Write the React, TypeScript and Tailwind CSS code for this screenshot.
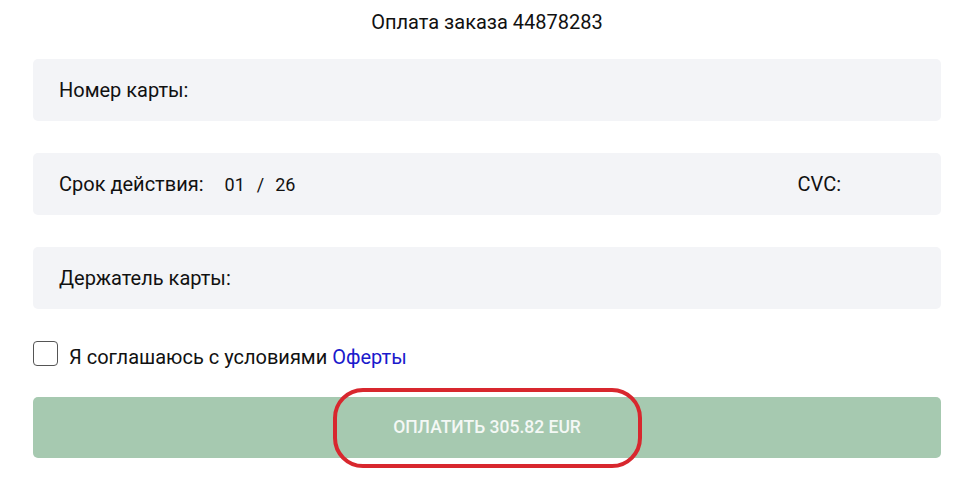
const font = { fontFamily: 'Roboto, "Liberation Sans", sans-serif' }

function Field({ children }: { children: React.ReactNode }) {
  return (
    <div className="flex h-[62px] items-center rounded-[5px] bg-[#f3f4f7] pl-[26px] pr-[26px] text-[20px] text-[#111]">
      {children}
    </div>
  )
}

export default function App() {
  return (
    <div className="min-h-[479px] bg-white pl-[33px] pr-[17px]" style={font}>
      <div className="flex h-[59px] items-start justify-center pt-[7px] text-[20px] text-[#111]">
        Оплата заказа 44878283
      </div>

      <div className="flex flex-col gap-[32px]">
        <Field>Номер карты:</Field>
        <Field>
          <span>Срок действия:</span>
          <span className="ml-[21px] text-[18px]">01</span>
          <span className="ml-[12px] text-[18px]">/</span>
          <span className="ml-[11px] text-[18px]">26</span>
          <span className="ml-auto mr-[74px]">CVC:</span>
        </Field>
        <Field>Держатель карты:</Field>
      </div>

      <label className="mt-[32px] flex h-[25px] items-center gap-[11px] text-[20px] leading-[25px] text-[#111]">
        <span className="h-[25px] w-[25px] shrink-0 rounded-[4px] border border-[#555] bg-white" />
        <span className="pt-[8px]">
          Я соглашаюсь с условиями <a className="text-[#1a1acc]">Оферты</a>
        </span>
      </label>

      <div className="relative mt-[31px]">
        <button className="flex h-[61px] w-full items-center justify-center rounded-[5px] bg-[#a6c9b0] text-[17.5px] font-medium text-[#f4f8f5]">
          ОПЛАТИТЬ 305.82 EUR
        </button>
        <div className="pointer-events-none absolute left-[300px] top-[-9px] h-[80px] w-[309px] rounded-[30px] border-[4px] border-[#d8272e]" />
      </div>
    </div>
  )
}
